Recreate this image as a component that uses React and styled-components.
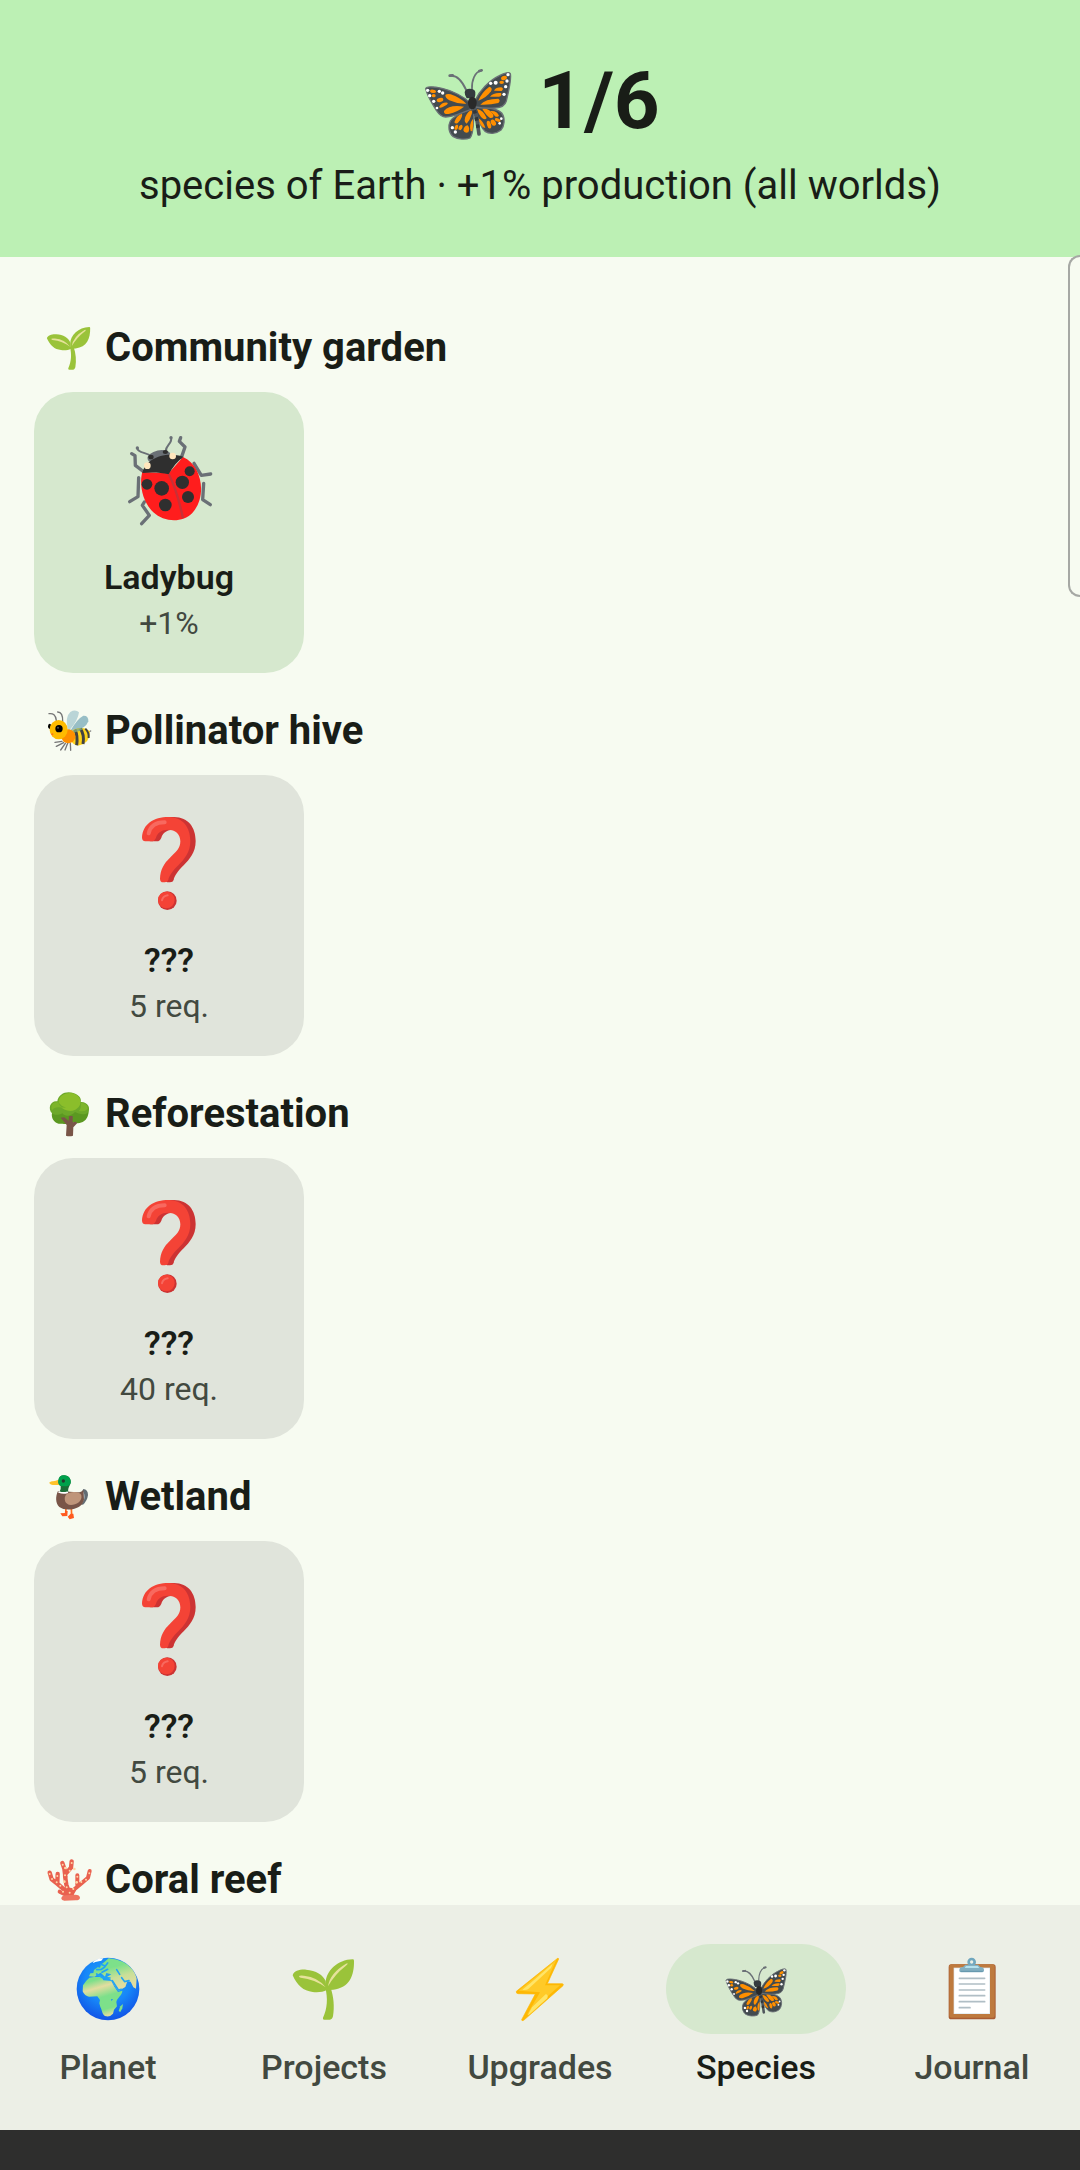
import React, { useState } from 'react'
import styled, { createGlobalStyle } from 'styled-components'

const GlobalStyle = createGlobalStyle`
  * {
    box-sizing: border-box;
  }
  body {
    margin: 0;
    background: #F7FBF1;
    color: #191D17;
    font-family: Roboto, "Noto Sans", sans-serif;
  }
`

const Screen = styled.div`
  position: relative;
  display: flex;
  flex-direction: column;
  height: 100vh;
  overflow: hidden;
`

const Header = styled.header`
  flex: none;
  padding: 53px 32px 43px;
  background: #BCF0B4;
  text-align: center;
`

const Title = styled.h1`
  display: flex;
  align-items: center;
  justify-content: center;
  gap: 22px;
  margin: 0 0 9px;
  font-size: 80px;
  line-height: 96px;
  font-weight: 700;
`

const Subtitle = styled.p`
  margin: 0;
  font-size: 40px;
  line-height: 56px;
`

const Content = styled.main`
  flex: 1;
  min-height: 0;
  padding: 33px 34px 0;
  overflow: hidden;
`

const SectionTitle = styled.h2`
  display: flex;
  align-items: center;
  gap: 12px;
  margin: 0;
  padding: 30px 11px 16px;
  font-size: 40px;
  line-height: 56px;
  font-weight: 700;
`

const Card = styled.article`
  display: flex;
  flex-direction: column;
  align-items: center;
  width: 270px;
  padding: 40px 0 27px;
  border-radius: 39px;
  background: ${props => props.$found ? '#D6E8CE' : '#E0E4DB'};
`

const CardName = styled.h3`
  margin: 26px 0 0;
  font-size: 34px;
  line-height: 46px;
  font-weight: 600;
`

const CardNote = styled.p`
  margin: 0;
  font-size: 32px;
  line-height: 46px;
  color: #424940;
`

const SidePanel = styled.aside`
  position: absolute;
  top: 255px;
  right: 0;
  width: 12px;
  height: 342px;
  border: 2px solid #A6A8A4;
  border-right: none;
  border-radius: 12px 0 0 12px;
  background: #F7FBF1;
`

const TabBar = styled.nav`
  flex: none;
  display: flex;
  padding: 39px 0 40px;
  background: #ECEFE6;
`

const Tab = styled.button`
  flex: 1;
  display: flex;
  flex-direction: column;
  align-items: center;
  gap: 10px;
  padding: 0;
  border: none;
  background: none;
  font-family: inherit;
  font-size: 34px;
  line-height: 46px;
  font-weight: 500;
  color: ${props => props.$active ? '#191D17' : '#424940'};
  cursor: pointer;
`

const TabPill = styled.span`
  display: flex;
  align-items: center;
  justify-content: center;
  width: 180px;
  height: 90px;
  border-radius: 45px;
  background: ${props => props.$active ? '#D6E8CE' : 'transparent'};
`

const SystemBar = styled.div`
  flex: none;
  height: 40px;
  background: #2E2E2D;
`

const Svg = styled.svg`
  flex: none;
  display: block;
  width: ${props => props.$size}px;
  height: ${props => props.$size}px;
`

const Butterfly = ({ size }) => (
  <Svg $size={size} viewBox='62 6 288 288' aria-hidden='true'>
    <g fill='none' stroke='#6A7076' strokeLinecap='round'>
      <path strokeWidth='6' d='M200 116C192 98 176 72 154 74' />
      <path strokeWidth='5' d='M218 116C216 90 226 62 246 59' />
      <path strokeWidth='8' d='M151 74L160 73M240 60L247 58' />
    </g>
    <g fill='#434B4F' stroke='#6A7076' strokeWidth='4' strokeLinejoin='round'>
      <path d='M218 172C195 182 165 192 153 210C145 225 148 246 162 257C176 266 200 266 212 261C224 250 222 210 224 180Z' />
      <path d='M230 168C255 168 290 170 307 186C319 203 315 225 305 237C290 249 270 250 257 241C240 225 232 190 228 175Z' />
      <path d='M79 113C82 105 104 107 128 112C160 119 195 138 212 155L214 176C190 184 165 198 139 198C126 198 119 190 111 178C98 158 83 132 79 113Z' />
      <path d='M226 150C240 120 270 88 300 74C315 66 331 61 333 68C337 85 328 120 321 150C317 164 305 170 288 171C266 173 245 171 229 168Z' />
    </g>
    <g fill='#FF8F00'>
      <path d='M138 132Q142 128 154 130Q182 140 201 158Q176 160 150 148Q137 140 138 132Z' />
      <path d='M134 180Q150 160 194 167Q176 182 148 189Q132 191 134 180Z' />
      <path d='M119 168Q128 153 144 155Q149 158 136 165Q123 173 119 168Z' />
      <ellipse cx='122' cy='147' rx='10' ry='6' transform='rotate(-12 122 147)' />
      <ellipse cx='103' cy='134' rx='6' ry='5' />
      <ellipse cx='101' cy='121' rx='9' ry='5' transform='rotate(8 101 121)' />
      <path d='M237 149Q247 124 270 107Q281 110 275 121Q262 140 237 149Z' />
      <path d='M243 161Q257 143 297 143Q305 148 297 156Q274 162 243 161Z' />
      <path d='M272 137Q282 124 305 126Q309 135 299 137Z' />
      <path d='M284 119Q289 109 306 109Q315 113 307 120Z' />
      <ellipse cx='307' cy='94' rx='7' ry='5' />
      <ellipse cx='314' cy='81' rx='9' ry='6' transform='rotate(-20 314 81)' />
      <path d='M197 213Q193 198 208 182Q222 172 217 190Q212 208 202 218Z' />
      <path d='M165 214Q171 193 188 188Q191 197 178 213Q171 222 165 214Z' />
      <path d='M214 241Q208 220 221 203Q223 222 219 240Z' />
      <path d='M177 235Q178 222 187 221Q194 226 184 238Z' />
      <path d='M192 238Q194 225 205 223Q213 232 207 244Q195 248 192 238Z' />
      <ellipse cx='171' cy='229' rx='5' ry='8' transform='rotate(22 171 229)' />
      <path d='M233 174Q252 177 262 201Q257 210 245 198Q236 187 233 174Z' />
      <path d='M249 174Q268 171 281 190Q286 202 272 201Q261 194 249 174Z' />
      <path d='M273 180Q293 178 299 194Q291 202 284 192Z' />
      <path d='M238 202Q252 211 258 231Q242 230 238 202Z' />
      <ellipse cx='269' cy='221' rx='6' ry='12' transform='rotate(-16 269 221)' />
      <ellipse cx='282' cy='215' rx='7' ry='10' transform='rotate(-32 282 215)' />
      <ellipse cx='295' cy='207' rx='9' ry='5' transform='rotate(20 295 207)' />
    </g>
    <g fill='#FFFFFF'>
      <circle cx='85' cy='118' r='5' />
      <circle cx='91' cy='134' r='5' />
      <circle cx='103' cy='151' r='5' />
      <circle cx='113' cy='171' r='4' />
      <circle cx='120' cy='121' r='5' />
      <circle cx='130' cy='126' r='5' />
      <circle cx='159' cy='230' r='5' />
      <circle cx='168' cy='243' r='5' />
      <circle cx='274' cy='97' r='5' />
      <circle cx='289' cy='95' r='6' />
      <circle cx='326' cy='71' r='5' />
      <circle cx='323' cy='90' r='5' />
      <circle cx='319' cy='107' r='5' />
      <circle cx='314' cy='130' r='5' />
      <circle cx='306' cy='203' r='4' />
      <circle cx='301' cy='217' r='4' />
    </g>
    <path fill='none' stroke='#50575C' strokeWidth='11' strokeLinecap='round' d='M224 170Q233 200 239 249' />
    <path fill='none' stroke='#30363A' strokeWidth='11' strokeDasharray='10 12' d='M225 178Q233 205 237 235' />
    <path fill='#343B3F' d='M196 124Q197 113 211 113Q227 113 228 124Q229 133 226 140L202 142Q196 133 196 124Z' />
    <ellipse cx='219' cy='156' rx='13' ry='19' fill='#292929' />
  </Svg>
)

const Ladybug = ({ size }) => (
  <Svg $size={size} viewBox='33 38 288 288' aria-hidden='true'>
    <g fill='none' stroke='#6A7076' strokeLinecap='round' strokeLinejoin='round' strokeWidth='10'>
      <path d='M65 103L75 109L76 138L102 158' />
      <path d='M212 55L208 66L225 83L214 115' />
      <path d='M252 132L274 168L302 164' />
      <path d='M281 192L278 241L301 256' />
      <path d='M86 175L84 232L59 247' />
      <path d='M103 248L97 258L118 288L95 313' />
      <path strokeWidth='6' d='M82 87C84 102 110 98 124 111' />
      <path strokeWidth='6' d='M183 55C188 72 168 76 167 96' />
    </g>
    <ellipse cx='147' cy='112' rx='35' ry='19' fill='#6A7076' transform='rotate(-12 147 112)' />
    <circle cx='82' cy='86' r='5' fill='#6A7076' />
    <circle cx='183' cy='55' r='5' fill='#6A7076' />
    <path fill='#FF1D1D' d='M97 158C88 190 94 244 130 279C162 309 217 312 247 281C292 232 277 138 219 113L176 162Z' />
    <path fill='#2F2F2F' d='M97 161C106 118 164 94 220 112C202 126 188 143 176 165C150 159 125 158 97 161Z' />
    <path fill='none' stroke='#C93036' strokeWidth='7' d='M176 164C195 200 208 245 219 297' />
    <g fill='#2F2F2F'>
      <ellipse cx='123' cy='113' rx='8' ry='7' />
      <ellipse cx='166' cy='98' rx='8' ry='6' />
      <circle cx='155' cy='207' r='22' />
      <circle cx='111' cy='195' r='16' />
      <circle cx='166' cy='257' r='19' />
      <circle cx='217' cy='189' r='20' />
      <circle cx='239' cy='156' r='15' />
      <circle cx='234' cy='233' r='18' />
    </g>
    <circle cx='112' cy='139' r='10' fill='#FFE6BD' />
    <circle cx='188' cy='110' r='10' fill='#FFE6BD' />
  </Svg>
)

const Unknown = ({ size }) => {
  const hook = 'M376 456Q366 456 366 444C368 405 400 383 446 383C490 384 511 415 511 455C511 490 492 510 475 528C458 545 447 560 445 572Q443 579 434 579L430 579Q420 579 420 568C421 540 432 522 450 505C468 487 481 478 481 456C481 434 466 421 444 421C425 421 412 430 408 445Q404 456 394 456Z'
  return (
    <Svg $size={size} viewBox='303 377 288 288' aria-hidden='true'>
      <path fill='#CC3333' d={hook} transform='translate(16 0)' />
      <path fill='#F44336' d={hook} />
      <circle cx='442' cy='634' r='28' fill='#CC3333' />
      <circle cx='439' cy='632' r='25' fill='#F44336' />
      <path fill='none' stroke='#F8695F' strokeWidth='12' strokeLinecap='round' d='M386 432C391 410 409 399 434 399' />
      <path fill='none' stroke='#F8695F' strokeWidth='6' strokeLinecap='round' d='M426 633Q429 620 443 618' />
    </Svg>
  )
}

const Sprout = ({ size }) => (
  <Svg $size={size} viewBox='0 0 204 204' aria-hidden='true'>
    <g fill='#9AC33A'>
      <path d='M106 98C114 130 112 160 99 188Q97 194 103 194L120 194Q126 194 129 184C134 155 131 125 122 98Z' />
      <path d='M8 61C12 47 30 43 48 44C78 46 100 60 107 78L110 105C100 111 84 113 68 111C40 108 22 92 8 61Z' />
      <path d='M107 84C108 48 142 14 188 13Q192 13 192 17C193 62 178 98 130 104L108 106Z' />
    </g>
    <path fill='#E6E29A' d='M27 63Q30 60 42 62Q84 66 107 97Q75 73 32 68Q26 67 27 63Z' />
    <path fill='#E6E29A' d='M173 25Q174 28 166 34Q135 58 114 94Q119 55 168 26Q172 24 173 25Z' />
  </Svg>
)

const Bee = ({ size }) => (
  <Svg $size={size} viewBox='45 21 144 144' aria-hidden='true'>
    <g fill='none' stroke='#757575' strokeWidth='4' strokeLinecap='round'>
      <path d='M57 41Q76 38 79 61M83 36Q99 36 98 65' />
      <path d='M96 124L75 127M101 128L79 139M106 130L92 150M113 130L105 150M121 130L122 151' />
      <path d='M172 97L182 93' />
    </g>
    <path fill='#BAD5D7' d='M113 88Q105 50 121 36Q136 27 147 37Q144 62 119 90Z' />
    <path fill='#97BEC6' d='M121 92Q142 56 160 47Q176 46 175 64Q168 85 130 96Z' />
    <path fill='#FDD21A' d='M128 90Q160 76 180 94Q179 131 148 136Q132 138 124 124Z' />
    <g fill='none' stroke='#424242' strokeWidth='9'>
      <path d='M135 89Q144 108 140 136' />
      <path d='M151 86Q164 104 159 132' />
      <path strokeWidth='6' d='M166 86Q178 98 176 114' />
    </g>
    <path fill='#7FA77E' opacity='0.8' d='M124 95Q142 80 160 86Q148 96 130 98Z' />
    <circle cx='115' cy='109' r='21' fill='#FF8F00' />
    <ellipse cx='59' cy='79' rx='5' ry='8' fill='#000000' />
    <ellipse cx='86' cy='89' rx='27' ry='29' fill='#FFBB00' />
    <circle cx='87' cy='86' r='11' fill='#000000' />
    <circle cx='84' cy='83' r='3' fill='#4E4E4E' />
    <circle cx='67' cy='103' r='3' fill='#FF6D1F' />
  </Svg>
)

const Tree = ({ size }) => (
  <Svg $size={size} viewBox='45 27 144 144' aria-hidden='true'>
    <path fill='#5B9821' d='M66 95C62 115 77 131 97 128C108 131 125 128 132 124C148 132 169 122 174 103C182 82 166 64 148 64L82 66Z' />
    <path fill='#795548' d='M108 164L110 132L92 110L103 109L116 120L117 105L128 105L128 124L137 122L142 126L130 139L129 164Q118 167 108 164Z' />
    <path fill='#6CA82A' d='M66 97C51 80 64 57 82 61C85 38 111 28 132 37C148 42 155 54 152 63C175 62 184 84 172 96C160 105 144 97 135 93C120 109 103 105 97 97C85 103 74 103 66 97Z' />
    <path fill='#8BBE2B' d='M86 65C85 40 116 30 136 40C159 53 154 78 136 86C120 94 102 88 94 79L108 80Q94 76 86 65Z' />
    <path fill='#7DB52B' d='M66 88C60 71 71 61 84 64Q89 75 98 80Q73 76 66 88ZM152 65Q173 66 173 83Q165 94 146 90Q155 82 152 65Z' />
  </Svg>
)

const Duck = ({ size }) => (
  <Svg $size={size} viewBox='45 65 144 144' aria-hidden='true'>
    <path fill='none' stroke='#FF6D1F' strokeWidth='5' d='M108 170L107 187M124 171L125 195' />
    <path fill='#FF5A1F' d='M105 178L113 179L112 194L97 195L91 186L105 185ZM122 187L130 187L132 200L119 204L113 196Z' />
    <path fill='#616C74' d='M160 113Q174 115 174 131Q172 148 159 160L151 159L154 124Z' />
    <path fill='#B8C5CC' d='M158 119Q166 130 163 143Q159 155 150 161L148 144Z' />
    <path fill='#795548' d='M84 119C76 135 76 156 88 167C107 181 145 174 157 157L162 145L160 115Q155 123 142 123Z' />
    <path fill='#BF957A' d='M108 130C119 119 149 119 154 131C158 151 138 161 123 161C104 160 100 141 108 130Z' />
    <path fill='#FFC229' d='M85 85C75 90 62 88 58 94C60 102 75 101 87 101Z' />
    <path fill='#1B6E36' d='M85 88C86 77 92 72 102 72C117 73 124 84 122 95C119 105 113 110 115 123L88 123Q94 112 92 104C87 101 84 95 85 88Z' />
    <path fill='#00A14B' d='M85 88C86 77 92 72 102 72C117 73 124 84 122 95C119 103 114 104 109 105L92 104C87 101 84 95 85 88Z' />
    <path fill='none' stroke='#FFFFFF' strokeWidth='5' strokeLinecap='round' d='M87 122Q99 127 112 123' />
    <circle cx='100' cy='89' r='5' fill='#26382C' />
  </Svg>
)

const Coral = ({ size }) => (
  <Svg $size={size} viewBox='45 44 144 144' aria-hidden='true'>
    <g fill='none' stroke='#E9614F' strokeLinecap='round' strokeLinejoin='round'>
      <path strokeWidth='13' d='M59 94L65 114L83 128L106 148L119 163M83 98L82 126M105 103L109 130L119 160' />
      <path strokeWidth='13' d='M97 65L103 82L106 106M125 60L123 79L108 96' />
      <path strokeWidth='12' d='M179 89L174 109L153 127L134 143L124 160M142 102L142 132M89 151L111 162' />
      <path strokeWidth='22' d='M120 150L120 165' />
    </g>
    <path fill='#EE7461' d='M94 172Q94 163 107 162L133 160Q149 159 150 169Q149 177 137 177L103 178Q95 177 94 172Z' />
    <g fill='#FFD6A6'>
      <circle cx='59' cy='98' r='3' />
      <circle cx='66' cy='113' r='3' />
      <circle cx='82' cy='104' r='3' />
      <circle cx='80' cy='123' r='3' />
      <circle cx='98' cy='70' r='3' />
      <circle cx='106' cy='80' r='4' />
      <circle cx='125' cy='65' r='3' />
      <circle cx='133' cy='83' r='4' />
      <circle cx='119' cy='88' r='3' />
      <circle cx='105' cy='102' r='3' />
      <circle cx='103' cy='121' r='4' />
      <circle cx='91' cy='133' r='3' />
      <circle cx='110' cy='138' r='3' />
      <circle cx='99' cy='151' r='3' />
      <circle cx='142' cy='106' r='3' />
      <circle cx='140' cy='123' r='4' />
      <circle cx='154' cy='122' r='3' />
      <circle cx='168' cy='115' r='3' />
      <circle cx='178' cy='96' r='3' />
      <circle cx='130' cy='143' r='3' />
      <circle cx='119' cy='154' r='3' />
    </g>
  </Svg>
)

const Globe = ({ size }) => (
  <Svg $size={size} viewBox='0 0 204 204' aria-hidden='true'>
    <defs>
      <radialGradient id='sea' cx='0.5' cy='0.35' r='0.62'>
        <stop offset='0' stopColor='#1FA4F5' />
        <stop offset='0.6' stopColor='#1787F8' />
        <stop offset='1' stopColor='#1259E8' />
      </radialGradient>
      <linearGradient id='land' x1='0.2' y1='0' x2='0.5' y2='1'>
        <stop offset='0.1' stopColor='#7DE08A' />
        <stop offset='0.3' stopColor='#E3DDA0' />
        <stop offset='0.55' stopColor='#7DE08A' />
        <stop offset='0.85' stopColor='#7DE08A' />
        <stop offset='1' stopColor='#D8DE9B' />
      </linearGradient>
      <linearGradient id='eurasia' x1='0' y1='0' x2='0.4' y2='1'>
        <stop offset='0.4' stopColor='#7DE08A' />
        <stop offset='0.7' stopColor='#C9DF98' />
        <stop offset='1' stopColor='#E3DDA0' />
      </linearGradient>
    </defs>
    <circle cx='102' cy='102' r='94' fill='url(#sea)' />
    <path fill='url(#land)' d='M46 68L60 66L83 66L88 76L112 78L121 95L132 111L145 107C146 120 128 129 127 141L129 154L120 164L117 176Q108 186 97 184C84 182 85 166 79 156L76 145L78 135L70 124L45 125Q32 124 26 109L27 91L37 77Z' />
    <path fill='url(#eurasia)' d='M45 64L49 55L58 54L60 45L71 37L78 38L81 29L91 21L104 10Q128 12 146 20C169 32 183 50 188 70L186 101L178 97L170 80L160 79L154 96L133 108L120 89L113 76L99 66L112 58L97 54L93 65L80 53L69 59L62 65Z' />
    <path fill='#7DE08A' d='M139 154L147 147L145 160L139 171L134 168Z' />
    <path fill='none' stroke='#1FA4F5' strokeWidth='5' strokeLinecap='round' d='M84 52L101 43M92 36L82 43L68 44M128 44L137 58M115 77L133 105L142 103M143 68L152 80L165 77M68 57L84 67L108 69M101 24L94 33L80 28' />
    <path fill='#FFFFFF' d='M54 24Q65 10 88 10L82 17L64 21Z' />
    <path fill='#1787F8' d='M111 133L117 132L113 138Z' />
  </Svg>
)

const Bolt = ({ size }) => (
  <Svg $size={size} viewBox='0 0 204 204' aria-hidden='true'>
    <path fill='#FEB804' stroke='#FEB804' strokeWidth='2' strokeLinejoin='round' d='M156 9L31 109Q30 116 36 116L88 117L47 194Q47 199 53 196L171 92Q174 87 169 86L124 86L158 12Z' />
    <path fill='#FFCA28' d='M151 14L38 107L102 112L62 181L162 91L117 91Z' />
    <path fill='#FFE567' d='M140 26L73 85L49 104Q59 106 66 103L135 39ZM119 118L78 157L65 181L71 178L124 130Q128 119 119 118Z' />
  </Svg>
)

const Clipboard = ({ size }) => (
  <Svg $size={size} viewBox='0 0 204 204' aria-hidden='true'>
    <rect x='32' y='28' width='141' height='165' rx='8' fill='#A85C34' />
    <rect x='34' y='28' width='136' height='160' rx='6' fill='#BE7A3E' />
    <rect x='47' y='38' width='109' height='139' fill='#DDE7EC' />
    <rect x='49' y='40' width='105' height='135' fill='#FFFFFF' />
    <path fill='none' stroke='#B0BEC5' strokeWidth='5' strokeLinecap='round' d='M64 70H140M64 87H140M64 105H140M64 122H140M64 140H140M64 158H96' />
    <circle cx='101' cy='21' r='9' fill='none' stroke='#70A7BE' strokeWidth='8' />
    <path fill='#82AFC1' d='M64 44Q65 37 75 36L82 29H120L127 36Q137 37 138 44V47Q137 52 132 52H70Q64 52 64 47Z' />
    <path fill='#B4E1ED' d='M84 33H119L124 39H80Z' />
    <path fill='none' stroke='#6294AB' strokeWidth='3' d='M68 49H134' />
  </Svg>
)

const sections = [
  { title: 'Community garden', Icon: Sprout, name: 'Ladybug', note: '+1%', found: true, Picture: Ladybug },
  { title: 'Pollinator hive', Icon: Bee, name: '???', note: '5 req.', Picture: Unknown },
  { title: 'Reforestation', Icon: Tree, name: '???', note: '40 req.', Picture: Unknown },
  { title: 'Wetland', Icon: Duck, name: '???', note: '5 req.', Picture: Unknown },
  { title: 'Coral reef', Icon: Coral }
]

const tabs = [
  { label: 'Planet', Icon: Globe },
  { label: 'Projects', Icon: Sprout },
  { label: 'Upgrades', Icon: Bolt },
  { label: 'Species', Icon: Butterfly },
  { label: 'Journal', Icon: Clipboard }
]

const App = () => {
  const [active, setActive] = useState('Species')

  return <Screen>
    <GlobalStyle />
    <Header>
      <Title><Butterfly size={96} />1/6</Title>
      <Subtitle>species of Earth · +1% production (all worlds)</Subtitle>
    </Header>
    <Content>
      {sections.map(({ title, Icon, name, note, found, Picture }) => (
        <section key={title}>
          <SectionTitle><Icon size={48} />{title}</SectionTitle>
          {name && <Card $found={found}>
            <Picture size={96} />
            <CardName>{name}</CardName>
            <CardNote>{note}</CardNote>
          </Card>}
        </section>
      ))}
    </Content>
    <TabBar>
      {tabs.map(({ label, Icon }) => (
        <Tab key={label} type='button' $active={label === active} onClick={() => setActive(label)}>
          <TabPill $active={label === active}><Icon size={68} /></TabPill>
          {label}
        </Tab>
      ))}
    </TabBar>
    <SystemBar />
    <SidePanel />
  </Screen>
}

export default App
